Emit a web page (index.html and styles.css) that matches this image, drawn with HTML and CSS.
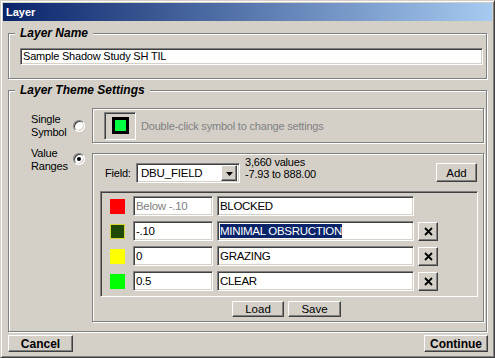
FILE: index.html
```html
<!DOCTYPE html>
<html>
<head>
<meta charset="utf-8">
<link rel="stylesheet" href="styles.css">
</head>
<body>
<div class="window">
  <div class="titlebar">Layer</div>
  <fieldset class="group name-group">
    <legend>Layer Name</legend>
    <div class="sunken name-box">Sample Shadow Study SH TIL</div>
  </fieldset>
  <fieldset class="group theme-group">
    <legend>Layer Theme Settings</legend>
    <div class="theme-grid">
      <div class="opt-label opt-single">Single<br>Symbol</div>
      <div class="radio radio-single"></div>
      <div class="etched symbol-panel">
        <div class="symbol-btn"><div class="sym-outer"><div class="sym-inner"></div></div></div>
        <span class="hint">Double-click symbol to change settings</span>
      </div>
      <div class="opt-label opt-value">Value<br>Ranges</div>
      <div class="radio radio-value checked"><div class="dot"></div></div>
      <div class="etched value-panel">
        <div class="field-row">
          <span class="field-label">Field:</span>
          <div class="sunken combo">
            <span class="combo-text">DBU_FIELD</span>
            <div class="raised combo-arrow"><svg width="7" height="4" viewBox="0 0 7 4"><polygon points="0,0 7,0 3.5,4" fill="#000"/></svg></div>
          </div>
          <div class="info">3,660 values<br>-7.93 to 888.00</div>
          <div class="raised btn add-btn">Add</div>
        </div>
        <div class="list">
          <div class="row">
            <div class="swatch sw-red"></div>
            <div class="sunken cell cell-from disabled">Below -.10</div>
            <div class="sunken cell cell-label">BLOCKED</div>
          </div>
          <div class="row">
            <div class="swatch sw-dark"></div>
            <div class="sunken cell cell-from">-.10</div>
            <div class="sunken cell cell-label"><span class="sel">MINIMAL OBSRUCTION</span></div>
            <div class="raised xbtn"><svg width="9" height="9" viewBox="0 0 9 9"><path d="M1 1 L8 8 M8 1 L1 8" stroke="#000" stroke-width="1.8"/></svg></div>
          </div>
          <div class="row">
            <div class="swatch sw-yellow"></div>
            <div class="sunken cell cell-from">0</div>
            <div class="sunken cell cell-label">GRAZING</div>
            <div class="raised xbtn"><svg width="9" height="9" viewBox="0 0 9 9"><path d="M1 1 L8 8 M8 1 L1 8" stroke="#000" stroke-width="1.8"/></svg></div>
          </div>
          <div class="row">
            <div class="swatch sw-green"></div>
            <div class="sunken cell cell-from">0.5</div>
            <div class="sunken cell cell-label">CLEAR</div>
            <div class="raised xbtn"><svg width="9" height="9" viewBox="0 0 9 9"><path d="M1 1 L8 8 M8 1 L1 8" stroke="#000" stroke-width="1.8"/></svg></div>
          </div>
        </div>
        <div class="file-buttons">
          <div class="raised btn load-btn">Load</div>
          <div class="raised btn save-btn">Save</div>
        </div>
      </div>
    </div>
  </fieldset>
  <div class="footer">
    <div class="raised btn bold-btn cancel-btn">Cancel</div>
    <div class="raised btn bold-btn continue-btn">Continue</div>
  </div>
</div>
</body>
</html>
```

FILE: styles.css
```css
* { box-sizing: border-box; }
html, body { margin: 0; padding: 0; }
body {
  width: 495px;
  height: 358px;
  overflow: hidden;
  background: #d4d0c8;
  font-family: "Liberation Sans", Arial, sans-serif;
  font-size: 11px;
  letter-spacing: -0.2px;
  color: #000;
}
.window {
  width: 495px;
  height: 358px;
  border: 1px solid;
  border-color: #d4d0c8 #404040 #404040 #d4d0c8;
  box-shadow: inset 1px 1px #fff, inset -1px -1px #808080;
  padding: 2px;
  display: flex;
  flex-direction: column;
}
.titlebar {
  height: 18px;
  line-height: 18px;
  padding-left: 3px;
  background: linear-gradient(to right, #0a246a, #a6caf0);
  color: #fff;
  font-weight: bold;
  letter-spacing: 0;
  flex: none;
}
.group {
  margin: 5px 5px 0 5px;
  padding: 0;
  min-width: 0;
  border: 1px solid #808080;
  box-shadow: inset 1px 1px #fff, 1px 1px #fff;
}
.theme-group { margin-top: 4px; }
.group legend {
  margin-left: 6px;
  padding: 0 5px;
  font-size: 12px;
  font-weight: bold;
  font-style: italic;
  line-height: 14px;
  letter-spacing: 0;
  background: #d4d0c8;
}
.sunken {
  border: 1px solid;
  border-color: #808080 #fff #fff #808080;
  box-shadow: inset 1px 1px #404040, inset -1px -1px #d4d0c8;
  background: #fff;
}
.raised {
  border: 1px solid;
  border-color: #fff #404040 #404040 #fff;
  box-shadow: inset -1px -1px #808080;
  background: #d4d0c8;
}
.etched {
  border: 1px solid #808080;
  box-shadow: inset 1px 1px #fff, 1px 1px #fff;
}
.name-box {
  margin: 8px 3px 13px 11px;
  height: 17px;
  line-height: 13px;
  padding: 1px 2px;
}
.theme-grid {
  margin: 11px 2px 9px 0;
  padding-left: 22px;
  display: grid;
  grid-template-columns: 42px 12px 1fr;
  grid-template-rows: 35px auto;
}
.opt-label {
  line-height: 13px;
}
.opt-single { align-self: center; }
.opt-value { align-self: start; margin-top: 4px; }
.radio {
  width: 12px;
  height: 12px;
  border-radius: 50%;
  border: 1px solid;
  border-color: #808080 #fff #fff #808080;
  box-shadow: inset 1px 1px #404040, inset -1px -1px #d4d0c8;
  background: #fff;
  display: flex;
  align-items: center;
  justify-content: center;
}
.radio-single { align-self: center; }
.radio-value { align-self: start; margin-top: 10px; }
.radio .dot {
  width: 4px;
  height: 4px;
  border-radius: 50%;
  background: #000;
}
.symbol-panel {
  margin-left: 7px;
  height: 35px;
  display: flex;
  align-items: center;
  padding-left: 11px;
}
.symbol-btn {
  width: 32px;
  height: 28px;
  border: 1px solid;
  border-color: #808080 #fff #fff #808080;
  box-shadow: inset 1px 1px #404040, inset -1px -1px #d4d0c8;
  display: flex;
  align-items: center;
  justify-content: center;
}
.sym-outer {
  width: 17px;
  height: 17px;
  background: #000;
  padding: 3px;
}
.sym-inner {
  width: 11px;
  height: 11px;
  background: #00ff40;
}
.hint {
  margin-left: 5px;
  color: #808080;
}
.value-panel {
  margin-left: 7px;
  margin-top: 10px;
  height: 169px;
  display: flex;
  flex-direction: column;
}
.field-row {
  margin-top: 2px;
  display: flex;
  align-items: flex-start;
}
.field-label {
  margin-left: 12px;
  margin-top: 7px;
  width: 31px;
  line-height: 20px;
}
.combo {
  margin-top: 7px;
  width: 104px;
  height: 20px;
  display: flex;
  align-items: center;
  padding: 2px 2px 2px 4px;
}
.combo-text {
  flex: 1;
  font-size: 11.5px;
  letter-spacing: -0.2px;
}
.combo-arrow {
  width: 16px;
  height: 16px;
  display: flex;
  align-items: center;
  justify-content: center;
  padding-top: 1px;
}
.info {
  margin-left: 5px;
  line-height: 12px;
}
.btn {
  display: flex;
  align-items: center;
  justify-content: center;
}
.add-btn {
  margin-left: auto;
  margin-right: 6px;
  margin-top: 7px;
  width: 41px;
  height: 19px;
  font-size: 11.5px;
  letter-spacing: 0;
}
.list {
  margin: 8px 5px 0 7px;
  border: 1px solid;
  border-color: #808080 #fff #fff #808080;
  box-shadow: inset 1px 1px #404040, inset -1px -1px #d4d0c8;
  padding: 4px 0 5px 9px;
  display: flex;
  flex-direction: column;
  gap: 5px;
}
.row {
  display: flex;
  align-items: center;
  height: 20px;
}
.swatch {
  width: 15px;
  height: 15px;
  margin-right: 8px;
}
.sw-red { background: #ff0000; }
.sw-dark { background: #1f4a08; border: 1px solid #d8d830; }
.sw-yellow { background: #ffff00; }
.sw-green { background: #00ff00; }
.cell {
  height: 20px;
  line-height: 16px;
  padding: 1px 2px;
  font-size: 11.5px;
  letter-spacing: -0.3px;
  white-space: nowrap;
  overflow: hidden;
}
.cell-from { width: 80px; }
.cell-label { width: 197px; margin-left: 4px; }
.disabled { color: #808080; }
.sel {
  background: #0a246a;
  color: #fff;
  display: inline-block;
  line-height: 14px;
}
.xbtn {
  width: 20px;
  height: 19px;
  margin-left: 4px;
  display: flex;
  align-items: center;
  justify-content: center;
}
.file-buttons {
  margin-top: 4px;
  padding-right: 3px;
  display: flex;
  justify-content: center;
  gap: 4px;
}
.load-btn { width: 52px; height: 16px; font-size: 11.5px; letter-spacing: 0; }
.save-btn { width: 53px; height: 16px; font-size: 11.5px; letter-spacing: 0; }
.footer {
  margin: 3px 4px 0 5px;
  display: flex;
  justify-content: space-between;
}
.bold-btn {
  height: 17px;
  font-weight: bold;
  font-size: 12px;
  letter-spacing: 0;
}
.cancel-btn { width: 65px; }
.continue-btn { width: 64px; }
```
